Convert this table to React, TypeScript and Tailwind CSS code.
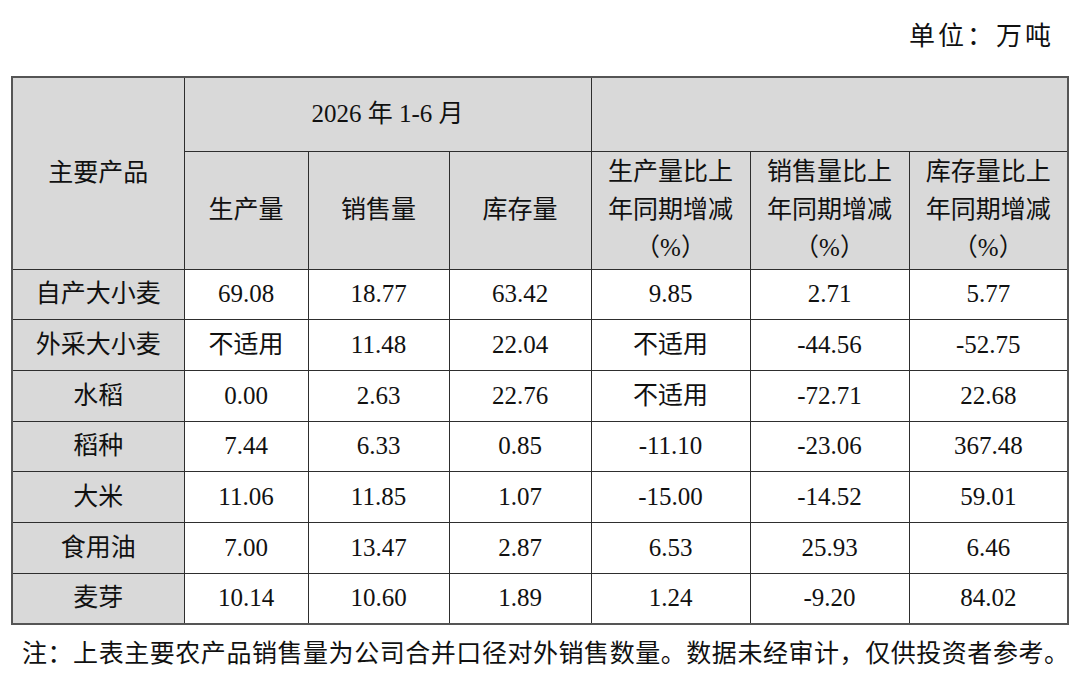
const rows: string[][] = [
  ["自产大小麦", "69.08", "18.77", "63.42", "9.85", "2.71", "5.77"],
  ["外采大小麦", "不适用", "11.48", "22.04", "不适用", "-44.56", "-52.75"],
  ["水稻", "0.00", "2.63", "22.76", "不适用", "-72.71", "22.68"],
  ["稻种", "7.44", "6.33", "0.85", "-11.10", "-23.06", "367.48"],
  ["大米", "11.06", "11.85", "1.07", "-15.00", "-14.52", "59.01"],
  ["食用油", "7.00", "13.47", "2.87", "6.53", "25.93", "6.46"],
  ["麦芽", "10.14", "10.60", "1.89", "1.24", "-9.20", "84.02"],
];

const cell = "border border-[#2e2e2e] text-center align-middle p-0";

export default function App() {
  return (
    <div
      className="w-[1080px] h-[674px] bg-white text-[#111] overflow-hidden"
      style={{ fontFamily: '"Liberation Serif", "Noto Sans CJK SC", serif' }}
    >
      <div className="h-[76px] flex items-center justify-end pr-[26px] pb-[4px] text-[26px] tracking-[3px]">
        单位：万吨
      </div>

      <div className="px-[11px]">
        <table className="w-[1056px] table-fixed border-collapse border-2 border-[#555] text-[25px] leading-[38px]">
          <colgroup>
            <col className="w-[172px]" />
            <col className="w-[124px]" />
            <col className="w-[141px]" />
            <col className="w-[142px]" />
            <col className="w-[159px]" />
            <col className="w-[159px]" />
            <col className="w-[159px]" />
          </colgroup>
          <thead className="bg-[#d9d9d9]">
            <tr className="h-[74px]">
              <td rowSpan={2} className={cell}>
                主要产品
              </td>
              <td colSpan={3} className={cell}>
                2026 年 1-6 月
              </td>
              <td colSpan={3} className={cell}></td>
            </tr>
            <tr className="h-[118px]">
              <td className={cell}>生产量</td>
              <td className={cell}>销售量</td>
              <td className={cell}>库存量</td>
              <td className={cell}>
                生产量比上
                <br />
                年同期增减
                <br />
                （%）
              </td>
              <td className={cell}>
                销售量比上
                <br />
                年同期增减
                <br />
                （%）
              </td>
              <td className={cell}>
                库存量比上
                <br />
                年同期增减
                <br />
                （%）
              </td>
            </tr>
          </thead>
          <tbody>
            {rows.map((r) => (
              <tr key={r[0]} className="h-[50.7px]">
                {r.map((v, i) => (
                  <td key={i} className={`${cell} ${i === 0 ? "bg-[#d9d9d9]" : ""}`}>
                    {v}
                  </td>
                ))}
              </tr>
            ))}
          </tbody>
        </table>
      </div>

      <div className="pl-[22px] pt-[12px] text-[25px] leading-[34px] tracking-[0.55px] whitespace-nowrap">
        注：上表主要农产品销售量为公司合并口径对外销售数量。数据未经审计，仅供投资者参考。
      </div>
    </div>
  );
}
